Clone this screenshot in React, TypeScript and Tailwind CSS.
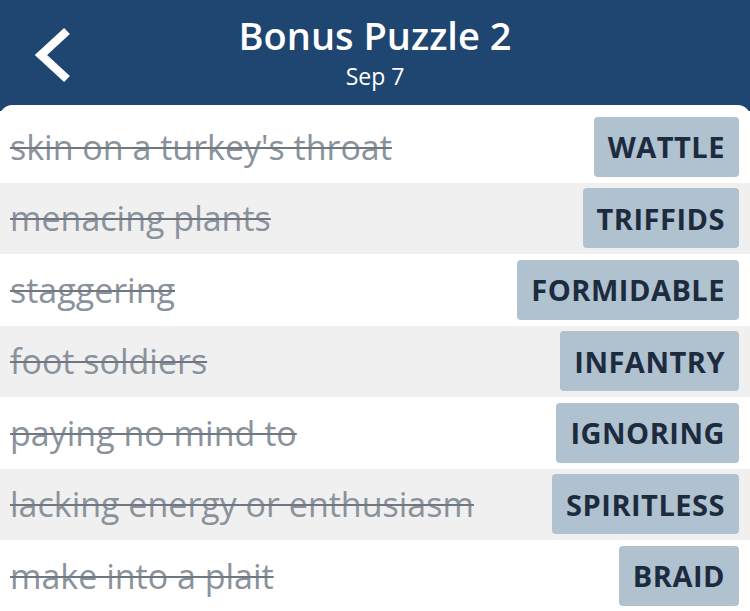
const rows = [
  { clue: "skin on a turkey's throat", answer: 'WATTLE' },
  { clue: 'menacing plants', answer: 'TRIFFIDS' },
  { clue: 'staggering', answer: 'FORMIDABLE' },
  { clue: 'foot soldiers', answer: 'INFANTRY' },
  { clue: 'paying no mind to', answer: 'IGNORING' },
  { clue: 'lacking energy or enthusiasm', answer: 'SPIRITLESS' },
  { clue: 'make into a plait', answer: 'BRAID' },
]

export default function App() {
  return (
    <div className="h-[611px] w-[750px] overflow-hidden bg-[#1f4571] font-['Open_Sans',sans-serif]">
      <header className="relative flex h-[105px] flex-col items-center pt-[10px]">
        <svg className="absolute left-0 top-0" width="90" height="100" viewBox="0 0 90 100">
          <polyline
            points="67,31 41,55 67,79"
            fill="none"
            stroke="white"
            strokeWidth="8.5"
            strokeLinecap="butt"
            strokeLinejoin="miter"
          />
        </svg>
        <h1 className="text-[38px] font-semibold leading-[50px] text-white">Bonus Puzzle 2</h1>
        <p className="mt-[1px] text-[23px] leading-[30px] text-white">Sep 7</p>
      </header>
      <div className="rounded-t-[12px] bg-white pt-[6px]">
        {rows.map((row, i) => (
          <div
            key={row.answer}
            className={`flex h-[71.5px] items-center justify-between pl-[10px] pr-[11px] ${
              i % 2 === 1 ? 'bg-[#f0f0f0]' : 'bg-white'
            }`}
          >
            <span className="text-[34px] leading-[44px] text-[#8a929b] line-through decoration-[#6f7781] decoration-[2px]">
              {row.clue}
            </span>
            <span className="flex h-[60px] items-center rounded-[4px] bg-[#b0c1d0] px-[14px] text-[29px] font-bold tracking-[0.5px] text-[#1c2b3e]">
              {row.answer}
            </span>
          </div>
        ))}
      </div>
    </div>
  )
}
